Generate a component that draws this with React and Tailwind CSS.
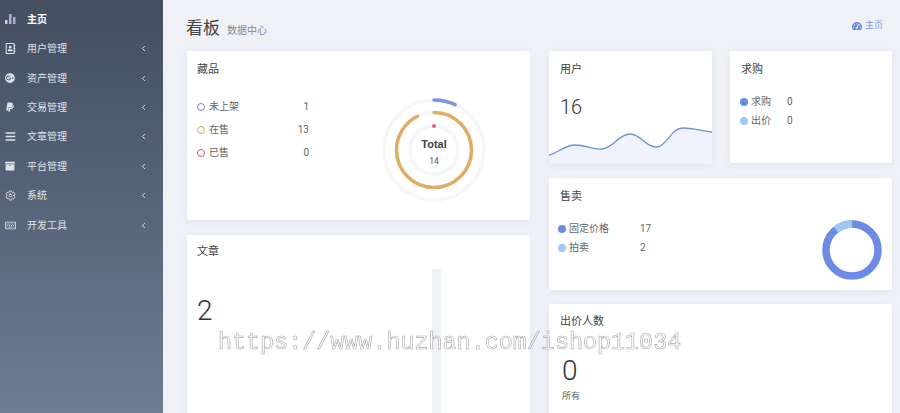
import React from 'react';
import { FaRegAddressBook, FaGooglePlus, FaPaypal, FaBars, FaArchive, FaRegKeyboard, FaTachometerAlt } from 'react-icons/fa';
import { IoSettingsOutline } from 'react-icons/io5';
import { ChevronLeft } from 'lucide-react';

// Small bar chart glyph for the home entry
const ChartIcon = () => (
  <svg width="11" height="10" viewBox="0 0 11 10">
    <rect x="0" y="6" width="2.5" height="4" fill="#c9ced8" />
    <rect x="4" y="0" width="2.5" height="10" fill="#b9a9d6" />
    <rect x="8" y="3" width="2.5" height="7" fill="#a9a6d8" />
  </svg>
);

const menu = [
  { label: '用户管理', icon: <FaRegAddressBook size={11} /> },
  { label: '资产管理', icon: <FaGooglePlus size={10} /> },
  { label: '交易管理', icon: <FaPaypal size={10} /> },
  { label: '文章管理', icon: <FaBars size={11} /> },
  { label: '平台管理', icon: <FaArchive size={10} /> },
  { label: '系统', icon: <IoSettingsOutline size={11} className="stroke-white" /> },
  { label: '开发工具', icon: <FaRegKeyboard size={11} /> },
];

const Sidebar = () => (
  <aside className="w-[163px] shrink-0 pt-[4.6px] bg-gradient-to-b from-[#434e60] to-[#6c7d94] text-[#dfe3ea]">
    <div className="h-[29.4px] flex items-center pl-[5px] text-white font-bold">
      <span className="w-[22px] flex"><ChartIcon /></span>
      <span className="text-[10px]">主页</span>
    </div>
    {menu.map((item) => (
      <div key={item.label} className="h-[29.4px] flex items-center pl-[5px] pr-[15px]">
        <span className="w-[22px] flex">{item.icon}</span>
        <span className="flex-1 text-[10px]">{item.label}</span>
        <ChevronLeft size={9} strokeWidth={2.5} />
      </div>
    ))}
  </aside>
);

const Card = ({ title, className, children }) => (
  <section className={`bg-white rounded-[2px] shadow-[0_2px_6px_rgba(210,215,230,0.45)] ${className}`}>
    <h3 className="text-[11px] leading-[14px] text-[#444] font-normal">{title}</h3>
    {children}
  </section>
);

const RingLegend = ({ color, label, value }) => (
  <div className="h-[23px] flex items-center text-[10px] text-[#666]">
    <span className={`w-2 h-2 rounded-full border-[1.5px] mr-[4px] ${color}`} />
    <span className="w-[70px]">{label}</span>
    <span className="w-[30px] text-right">{value}</span>
  </div>
);

const DotLegend = ({ color, label, value, labelWidth }) => (
  <div className="h-[19px] flex items-center text-[10px] text-[#666]">
    <span className={`w-2 h-2 rounded-full mr-[3px] ${color}`} />
    <span className={labelWidth}>{label}</span>
    <span>{value}</span>
  </div>
);

const RingChart = () => (
  <svg width="110" height="110" viewBox="0 0 110 110">
    <circle cx="55" cy="55" r="50" fill="none" stroke="#f5f6f8" strokeWidth="3.5" />
    <circle cx="55" cy="55" r="37.5" fill="none" stroke="#f5f6f8" strokeWidth="3.5" />
    <circle cx="55" cy="55" r="24" fill="none" stroke="#f5f6f8" strokeWidth="3.5" />
    <circle cx="55" cy="55" r="50" fill="none" stroke="#7b93e0" strokeWidth="3.5" strokeLinecap="round" pathLength="360" strokeDasharray="25 335" transform="rotate(-90 55 55)" />
    <circle cx="55" cy="55" r="37.5" fill="none" stroke="#dfae66" strokeWidth="3.5" strokeLinecap="round" pathLength="360" strokeDasharray="334 26" transform="rotate(-90 55 55)" />
    <circle cx="55" cy="31" r="1.9" fill="#d9597a" />
    <text x="55" y="53" textAnchor="middle" fontSize="11" fontWeight="700" fontFamily="Liberation Sans, sans-serif" fill="#3c4250">Total</text>
    <text x="55" y="69" textAnchor="middle" fontSize="8.5" fontFamily="Roboto, sans-serif" fill="#555">14</text>
  </svg>
);

const Sparkline = () => {
  const line = 'M0 31 C9 29 16 21 26 21 C36 21 44 26 53 25 C64 24 70 10 81 10 C92 10 97 24 108 23 C118 22 122 4 134 4 C144 4 152 7 163 8';
  return (
    <svg width="163" height="40" viewBox="0 0 163 40" className="block">
      <path d={`${line} L163 40 L0 40 Z`} fill="#f0f3fb" />
      <path d={line} fill="none" stroke="#6f8ed8" strokeWidth="1.3" />
    </svg>
  );
};

const Donut = () => (
  <svg width="62" height="62" viewBox="0 0 62 62">
    <circle cx="31" cy="31" r="26" fill="none" stroke="#6c8be4" strokeWidth="7.5" />
    <circle cx="31" cy="31" r="26" fill="none" stroke="#9fc9ef" strokeWidth="7.5" pathLength="360" strokeDasharray="38 322" transform="rotate(-128 31 31)" />
  </svg>
);

export default function App() {
  return (
    <div className="relative w-[900px] h-[413px] overflow-hidden flex bg-[#eff1f7] font-['Roboto','Noto_Sans_CJK_SC',sans-serif]">
      <Sidebar />

      <main className="flex-1 min-w-0 pl-6 pr-2">
        <header className="h-[51px] pt-[17px] flex items-start justify-between pr-[9px]">
          <div className="flex items-baseline">
            <h1 className="text-[17px] leading-[22px] font-normal text-[#444] -ml-px">看板</h1>
            <span className="ml-[7px] text-[10px] text-[#888]">数据中心</span>
          </div>
          <div className="flex items-center gap-[3px] pt-[2px] text-[9px] text-[#6c8be4]">
            <FaTachometerAlt size={10} />
            <span className="text-[#7f97df]">主页</span>
          </div>
        </header>

        <div className="grid grid-cols-[343px_343px] gap-x-[19px] items-start">
          <div className="flex flex-col gap-[15px]">
            <Card title="藏品" className="h-[169px] pl-[10px] pt-[12px]">
              <div className="flex">
                <div className="pt-[18px] flex flex-col">
                  <RingLegend color="border-[#7b7fdc]" label="未上架" value="1" />
                  <RingLegend color="border-[#dcab62]" label="在售" value="13" />
                  <RingLegend color="border-[#d9527a]" label="已售" value="0" />
                </div>
                <div className="ml-[70px] pt-[18px]">
                  <RingChart />
                </div>
              </div>
            </Card>
            <Card title="文章" className="h-[300px] pl-[10px] pt-[10px]">
              <div className="flex">
                <div className="w-[235px] pt-[32px] text-[28px] leading-[40px] text-[#333] font-light">2</div>
                <div className="w-[9px] h-[260px] mt-[10px] bg-[#eef1f7]" />
              </div>
            </Card>
          </div>

          <div className="flex flex-col gap-[14px]">
            <div className="grid grid-cols-[163px_162px] gap-x-[18px] items-start">
              <Card title="用户" className="h-[113px] pt-[12px] overflow-hidden [&>h3]:pl-[11px]">
                <div className="pl-[11px] pt-[15px] h-[47px] text-[20px] leading-[30px] text-[#333] font-light">16</div>
                <Sparkline />
              </Card>
              <Card title="求购" className="h-[112px] pl-[11px] pt-[12px]">
                <div className="pt-[15px] -ml-[1px]">
                  <DotLegend color="bg-[#6c8be4]" label="求购" value="0" labelWidth="w-[36px]" />
                  <DotLegend color="bg-[#9fc9ef]" label="出价" value="0" labelWidth="w-[36px]" />
                </div>
              </Card>
            </div>

            <Card title="售卖" className="h-[112px] pl-[11px] pt-[12px]">
              <div className="flex justify-between pr-[9px]">
                <div className="pt-[15px] -ml-[2px]">
                  <DotLegend color="bg-[#6c8be4]" label="固定价格" value="17" labelWidth="w-[71px]" />
                  <DotLegend color="bg-[#9fc9ef]" label="拍卖" value="2" labelWidth="w-[71px]" />
                </div>
                <div className="pt-[15px]">
                  <Donut />
                </div>
              </div>
            </Card>

            <Card title="出价人数" className="h-[120px] pl-[11px] pt-[11px]">
              <div className="pl-[2px] pt-[24px] text-[28px] leading-[36px] text-[#333] font-light">0</div>
              <div className="pl-[2px] pt-[1px] text-[9px] leading-[12px] text-[#666]">所有</div>
            </Card>
          </div>
        </div>
      </main>

      {/* Watermark over the page */}
      <div className="absolute left-[218px] top-[328px] font-['Liberation_Mono',monospace] text-[23.4px] leading-[30px] whitespace-nowrap text-white/40 will-change-transform [-webkit-text-stroke:0.6px_#a9a9a9]">
        https://www.huzhan.com/ishop11034
      </div>
    </div>
  );
}
